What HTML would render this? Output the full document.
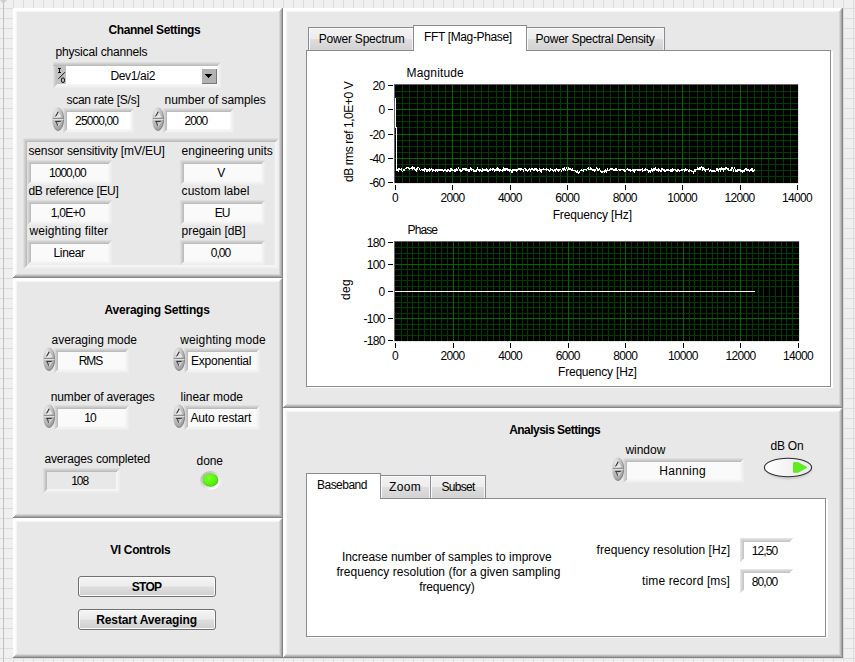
<!DOCTYPE html>
<html lang="en"><head><meta charset="utf-8"><title>FFT Analyzer Front Panel</title>
<style>
html,body{margin:0;padding:0}
body{width:855px;height:662px;overflow:hidden;position:relative;background-color:#f0f0f0;
 background-image:linear-gradient(to right,#dcdcdc 1px,transparent 1px),linear-gradient(to bottom,#dcdcdc 1px,transparent 1px);
 background-size:10px 10px;background-position:3px 8px;
 font:12px/14px "Liberation Sans",sans-serif;color:#000}
.abs,.t,.panel,.rec,.spin,.tab,.tabc,.btn{position:absolute;box-sizing:border-box}
.t{z-index:5;white-space:pre;font:12px/14px "Liberation Sans",sans-serif;color:#000}
.t.b{font-weight:bold}
.panel{background:#e8e8e8;box-shadow:inset -1px -1px 0 #858585,inset 1px 1px 0 #fff,inset -2px -2px 0 #a6a6a6,inset 2px 2px 0 #fff,inset -3px -3px 0 #bfbfbf,inset 3px 3px 0 #fcfcfc,inset -4px -4px 0 #d6d6d6,inset 4px 4px 0 #f5f5f5}
.rec{background:#fafafa;box-shadow:inset 1px 1px 0 #dedede,inset -1px -1px 0 #ececec,inset 2px 2px 0 #d2d2d2,inset -2px -2px 0 #f0f0f0,inset 3px 3px 0 #c7c7c7,inset -3px -3px 0 #f3f3f3,inset 4px 4px 0 #bcbcbc,inset -4px -4px 0 #f6f6f6}
.rec.w{background:#fff}
.rec.ow{background:#fff;box-shadow:inset 1px 1px 0 #e4e4e4,inset -1px -1px 0 #fff,inset 2px 2px 0 #d8d8d8,inset -2px -2px 0 #fff,inset 3px 3px 0 #cfcfcf,inset -3px -3px 0 #fff,inset 4px 4px 0 #c6c6c6,inset -4px -4px 0 #fff}
.rec.tr{background:#e8e8e8}
.rec.sub{background:#e8e8e8}
.tab{border:1px solid #898c95;border-bottom:none;box-shadow:inset 1px 1px 0 #fafafa,inset -1px 0 0 #f4f4f4;background:linear-gradient(to bottom,#f3f3f3 0,#ececec 48%,#dedede 52%,#d2d2d2 100%)}
.tab.act{background:#fff;z-index:2;box-shadow:none}
.tabc{background:#fff;border:1px solid #898c95;box-shadow:2px 1px 0 #fff}
.btn{border:1px solid #707070;border-radius:3px;background:linear-gradient(to bottom,#f4f4f4 0,#ececec 48%,#dedede 52%,#d0d0d0 100%);box-shadow:inset 0 0 0 1px #fbfbfb}
svg{position:absolute;overflow:visible}
.spin{z-index:3}
</style></head><body>

<div class="abs" style="left:3px;top:0;width:1px;height:662px;background:#c0c0c0"></div>
<svg style="left:0;top:0" width="8" height="4"><polygon points="0,0 7,0 3.5,4" fill="#d0d0d0"/></svg>
<div class="panel" style="left:13px;top:8px;width:270px;height:270px"></div>
<div class="panel" style="left:13px;top:278px;width:270px;height:240px"></div>
<div class="panel" style="left:13px;top:518px;width:270px;height:140px"></div>
<div class="panel" style="left:283px;top:8px;width:560px;height:400px"></div>
<div class="panel" style="left:283px;top:408px;width:560px;height:250px"></div>
<div class="rec w" style="left:53px;top:62px;width:168px;height:26px;background:#fff"></div>
<div class="abs" style="left:56px;top:66px;width:10px;height:18px;background:#c2c2c2"></div>
<div class="abs" style="left:53px;top:65px;width:13px;height:1px;background:#bcbcbc"></div>
<svg style="left:56px;top:66px" width="11" height="18" viewBox="0 0 11 18"><g stroke="#111" stroke-width="1" fill="none" shape-rendering="crispEdges"><path d="M2 2.5H5M3.5 2.5V7M2 6.5H5"/></g>
<path d="M2.4 12.8 L9 6.2" stroke="#111" stroke-width="1" fill="none"/><ellipse cx="7" cy="14.2" rx="1.6" ry="2.4" stroke="#111" stroke-width="1" fill="none"/></svg>
<div class="abs" style="left:200px;top:67px;width:17px;height:17px;background:#b2b2b2;box-shadow:inset 2px 2px 0 #fcfcfc,inset -1px -1px 0 #777"></div>
<svg style="left:205px;top:74px" width="7" height="4" shape-rendering="crispEdges"><path d="M0 0H7V1H6V2H5V3H4V4H3V3H2V2H1V1H0Z" fill="#000"/></svg>
<svg class="spin" style="left:52px;top:107px" width="12" height="24" viewBox="0 0 12 24">
<defs><radialGradient id="sg52_107" cx="32%" cy="22%" r="80%"><stop offset="0" stop-color="#ececec"/><stop offset="0.4" stop-color="#c8c8c8"/><stop offset="1" stop-color="#a0a0a0"/></radialGradient>
<linearGradient id="sr52_107" x1="0" y1="0" x2="1" y2="1"><stop offset="0.25" stop-color="#d8d8d8" stop-opacity="0.6"/><stop offset="0.6" stop-color="#8c8c8c"/><stop offset="1" stop-color="#6a6a6a"/></linearGradient></defs>
<ellipse cx="6" cy="12" rx="5.6" ry="11.5" fill="url(#sg52_107)" stroke="url(#sr52_107)" stroke-width="0.9"/>
<rect x="0.8" y="11" width="10.6" height="1" fill="#8e8e8e"/><rect x="0.8" y="12" width="10.6" height="1" fill="#e0e0e0"/>
<path d="M6 5 L8.6 9.6 L3.4 9.6 Z" fill="#dcdcdc"/><path d="M6.2 4.8 L3.6 9.4" stroke="#2e2e2e" stroke-width="1.1" fill="none"/><path d="M6.6 6.4 L8.8 9.6 L4 9.6" stroke="#f6f6f6" stroke-width="0.8" fill="none"/>
<path d="M3.4 14.4 L8.6 14.4 L6 19 Z" fill="#bcbcbc"/><path d="M3.2 14.4 L8.8 14.4" stroke="#333" stroke-width="1.1" fill="none"/><path d="M4 14.8 L6 19" stroke="#3c3c3c" stroke-width="1" fill="none"/><path d="M6.2 19 L8.6 14.9" stroke="#f0f0f0" stroke-width="0.8" fill="none"/>
</svg>
<div class="rec w" style="left:63px;top:108px;width:71px;height:25px"></div>
<svg class="spin" style="left:152px;top:107px" width="12" height="24" viewBox="0 0 12 24">
<defs><radialGradient id="sg152_107" cx="32%" cy="22%" r="80%"><stop offset="0" stop-color="#ececec"/><stop offset="0.4" stop-color="#c8c8c8"/><stop offset="1" stop-color="#a0a0a0"/></radialGradient>
<linearGradient id="sr152_107" x1="0" y1="0" x2="1" y2="1"><stop offset="0.25" stop-color="#d8d8d8" stop-opacity="0.6"/><stop offset="0.6" stop-color="#8c8c8c"/><stop offset="1" stop-color="#6a6a6a"/></linearGradient></defs>
<ellipse cx="6" cy="12" rx="5.6" ry="11.5" fill="url(#sg152_107)" stroke="url(#sr152_107)" stroke-width="0.9"/>
<rect x="0.8" y="11" width="10.6" height="1" fill="#8e8e8e"/><rect x="0.8" y="12" width="10.6" height="1" fill="#e0e0e0"/>
<path d="M6 5 L8.6 9.6 L3.4 9.6 Z" fill="#dcdcdc"/><path d="M6.2 4.8 L3.6 9.4" stroke="#2e2e2e" stroke-width="1.1" fill="none"/><path d="M6.6 6.4 L8.8 9.6 L4 9.6" stroke="#f6f6f6" stroke-width="0.8" fill="none"/>
<path d="M3.4 14.4 L8.6 14.4 L6 19 Z" fill="#bcbcbc"/><path d="M3.2 14.4 L8.8 14.4" stroke="#333" stroke-width="1.1" fill="none"/><path d="M4 14.8 L6 19" stroke="#3c3c3c" stroke-width="1" fill="none"/><path d="M6.2 19 L8.6 14.9" stroke="#f0f0f0" stroke-width="0.8" fill="none"/>
</svg>
<div class="rec w" style="left:163px;top:108px;width:71px;height:25px"></div>
<div class="rec sub" style="left:23px;top:138px;width:256px;height:131px"></div>
<div class="rec " style="left:27px;top:160px;width:85px;height:25px"></div>
<div class="rec " style="left:180px;top:160px;width:85px;height:25px"></div>
<div class="rec " style="left:27px;top:200px;width:85px;height:25px"></div>
<div class="rec " style="left:180px;top:200px;width:85px;height:25px"></div>
<div class="rec " style="left:27px;top:240px;width:85px;height:25px"></div>
<div class="rec " style="left:180px;top:240px;width:85px;height:25px"></div>
<svg class="spin" style="left:43px;top:347px" width="12" height="24" viewBox="0 0 12 24">
<defs><radialGradient id="sg43_347" cx="32%" cy="22%" r="80%"><stop offset="0" stop-color="#ececec"/><stop offset="0.4" stop-color="#c8c8c8"/><stop offset="1" stop-color="#a0a0a0"/></radialGradient>
<linearGradient id="sr43_347" x1="0" y1="0" x2="1" y2="1"><stop offset="0.25" stop-color="#d8d8d8" stop-opacity="0.6"/><stop offset="0.6" stop-color="#8c8c8c"/><stop offset="1" stop-color="#6a6a6a"/></linearGradient></defs>
<ellipse cx="6" cy="12" rx="5.6" ry="11.5" fill="url(#sg43_347)" stroke="url(#sr43_347)" stroke-width="0.9"/>
<rect x="0.8" y="11" width="10.6" height="1" fill="#8e8e8e"/><rect x="0.8" y="12" width="10.6" height="1" fill="#e0e0e0"/>
<path d="M6 5 L8.6 9.6 L3.4 9.6 Z" fill="#dcdcdc"/><path d="M6.2 4.8 L3.6 9.4" stroke="#2e2e2e" stroke-width="1.1" fill="none"/><path d="M6.6 6.4 L8.8 9.6 L4 9.6" stroke="#f6f6f6" stroke-width="0.8" fill="none"/>
<path d="M3.4 14.4 L8.6 14.4 L6 19 Z" fill="#bcbcbc"/><path d="M3.2 14.4 L8.8 14.4" stroke="#333" stroke-width="1.1" fill="none"/><path d="M4 14.8 L6 19" stroke="#3c3c3c" stroke-width="1" fill="none"/><path d="M6.2 19 L8.6 14.9" stroke="#f0f0f0" stroke-width="0.8" fill="none"/>
</svg>
<div class="rec " style="left:54px;top:348px;width:75px;height:25px"></div>
<svg class="spin" style="left:173px;top:347px" width="12" height="24" viewBox="0 0 12 24">
<defs><radialGradient id="sg173_347" cx="32%" cy="22%" r="80%"><stop offset="0" stop-color="#ececec"/><stop offset="0.4" stop-color="#c8c8c8"/><stop offset="1" stop-color="#a0a0a0"/></radialGradient>
<linearGradient id="sr173_347" x1="0" y1="0" x2="1" y2="1"><stop offset="0.25" stop-color="#d8d8d8" stop-opacity="0.6"/><stop offset="0.6" stop-color="#8c8c8c"/><stop offset="1" stop-color="#6a6a6a"/></linearGradient></defs>
<ellipse cx="6" cy="12" rx="5.6" ry="11.5" fill="url(#sg173_347)" stroke="url(#sr173_347)" stroke-width="0.9"/>
<rect x="0.8" y="11" width="10.6" height="1" fill="#8e8e8e"/><rect x="0.8" y="12" width="10.6" height="1" fill="#e0e0e0"/>
<path d="M6 5 L8.6 9.6 L3.4 9.6 Z" fill="#dcdcdc"/><path d="M6.2 4.8 L3.6 9.4" stroke="#2e2e2e" stroke-width="1.1" fill="none"/><path d="M6.6 6.4 L8.8 9.6 L4 9.6" stroke="#f6f6f6" stroke-width="0.8" fill="none"/>
<path d="M3.4 14.4 L8.6 14.4 L6 19 Z" fill="#bcbcbc"/><path d="M3.2 14.4 L8.8 14.4" stroke="#333" stroke-width="1.1" fill="none"/><path d="M4 14.8 L6 19" stroke="#3c3c3c" stroke-width="1" fill="none"/><path d="M6.2 19 L8.6 14.9" stroke="#f0f0f0" stroke-width="0.8" fill="none"/>
</svg>
<div class="rec " style="left:184px;top:348px;width:76px;height:25px"></div>
<svg class="spin" style="left:43px;top:404px" width="12" height="24" viewBox="0 0 12 24">
<defs><radialGradient id="sg43_404" cx="32%" cy="22%" r="80%"><stop offset="0" stop-color="#ececec"/><stop offset="0.4" stop-color="#c8c8c8"/><stop offset="1" stop-color="#a0a0a0"/></radialGradient>
<linearGradient id="sr43_404" x1="0" y1="0" x2="1" y2="1"><stop offset="0.25" stop-color="#d8d8d8" stop-opacity="0.6"/><stop offset="0.6" stop-color="#8c8c8c"/><stop offset="1" stop-color="#6a6a6a"/></linearGradient></defs>
<ellipse cx="6" cy="12" rx="5.6" ry="11.5" fill="url(#sg43_404)" stroke="url(#sr43_404)" stroke-width="0.9"/>
<rect x="0.8" y="11" width="10.6" height="1" fill="#8e8e8e"/><rect x="0.8" y="12" width="10.6" height="1" fill="#e0e0e0"/>
<path d="M6 5 L8.6 9.6 L3.4 9.6 Z" fill="#dcdcdc"/><path d="M6.2 4.8 L3.6 9.4" stroke="#2e2e2e" stroke-width="1.1" fill="none"/><path d="M6.6 6.4 L8.8 9.6 L4 9.6" stroke="#f6f6f6" stroke-width="0.8" fill="none"/>
<path d="M3.4 14.4 L8.6 14.4 L6 19 Z" fill="#bcbcbc"/><path d="M3.2 14.4 L8.8 14.4" stroke="#333" stroke-width="1.1" fill="none"/><path d="M4 14.8 L6 19" stroke="#3c3c3c" stroke-width="1" fill="none"/><path d="M6.2 19 L8.6 14.9" stroke="#f0f0f0" stroke-width="0.8" fill="none"/>
</svg>
<div class="rec " style="left:54px;top:405px;width:75px;height:25px"></div>
<svg class="spin" style="left:173px;top:404px" width="12" height="24" viewBox="0 0 12 24">
<defs><radialGradient id="sg173_404" cx="32%" cy="22%" r="80%"><stop offset="0" stop-color="#ececec"/><stop offset="0.4" stop-color="#c8c8c8"/><stop offset="1" stop-color="#a0a0a0"/></radialGradient>
<linearGradient id="sr173_404" x1="0" y1="0" x2="1" y2="1"><stop offset="0.25" stop-color="#d8d8d8" stop-opacity="0.6"/><stop offset="0.6" stop-color="#8c8c8c"/><stop offset="1" stop-color="#6a6a6a"/></linearGradient></defs>
<ellipse cx="6" cy="12" rx="5.6" ry="11.5" fill="url(#sg173_404)" stroke="url(#sr173_404)" stroke-width="0.9"/>
<rect x="0.8" y="11" width="10.6" height="1" fill="#8e8e8e"/><rect x="0.8" y="12" width="10.6" height="1" fill="#e0e0e0"/>
<path d="M6 5 L8.6 9.6 L3.4 9.6 Z" fill="#dcdcdc"/><path d="M6.2 4.8 L3.6 9.4" stroke="#2e2e2e" stroke-width="1.1" fill="none"/><path d="M6.6 6.4 L8.8 9.6 L4 9.6" stroke="#f6f6f6" stroke-width="0.8" fill="none"/>
<path d="M3.4 14.4 L8.6 14.4 L6 19 Z" fill="#bcbcbc"/><path d="M3.2 14.4 L8.8 14.4" stroke="#333" stroke-width="1.1" fill="none"/><path d="M4 14.8 L6 19" stroke="#3c3c3c" stroke-width="1" fill="none"/><path d="M6.2 19 L8.6 14.9" stroke="#f0f0f0" stroke-width="0.8" fill="none"/>
</svg>
<div class="rec " style="left:184px;top:405px;width:76px;height:25px"></div>
<div class="rec tr" style="left:43px;top:468px;width:77px;height:25px"></div>
<svg style="left:199px;top:470px" width="23" height="21" viewBox="0 0 23 21">
<defs><linearGradient id="lr" x1="0" y1="0" x2="1" y2="1"><stop offset="0.1" stop-color="#b4b4b4"/><stop offset="0.5" stop-color="#dcdcdc"/><stop offset="0.8" stop-color="#ffffff"/></linearGradient>
<radialGradient id="lg" cx="40%" cy="35%" r="70%"><stop offset="0" stop-color="#7dff2e"/><stop offset="0.6" stop-color="#5cf612"/><stop offset="1" stop-color="#4fdc10"/></radialGradient></defs>
<ellipse cx="11.5" cy="10.5" rx="10.2" ry="9.4" fill="url(#lr)"/><ellipse cx="11.5" cy="10.1" rx="7.8" ry="6.7" fill="#46c40c"/><ellipse cx="11.2" cy="9.8" rx="7.4" ry="6.3" fill="url(#lg)"/></svg>
<div class="btn" style="left:78px;top:576px;width:138px;height:21px"></div>
<div class="btn" style="left:78px;top:609px;width:138px;height:21px"></div>
<div class="tabc" style="left:306px;top:50px;width:525px;height:337px"></div>
<div class="tab" style="left:308px;top:27px;width:106px;height:23px"></div>
<div class="tab" style="left:526px;top:27px;width:139px;height:23px"></div>
<div class="tab act" style="left:413px;top:25px;width:114px;height:26px"></div>
<div class="tabc" style="left:306px;top:498px;width:520px;height:139px"></div>
<div class="tab" style="left:380px;top:475px;width:51px;height:23px"></div>
<div class="tab" style="left:430px;top:475px;width:56px;height:23px"></div>
<div class="tab act" style="left:306px;top:473px;width:75px;height:26px"></div>
<svg class="spin" style="left:612px;top:457px" width="12" height="24" viewBox="0 0 12 24">
<defs><radialGradient id="sg612_457" cx="32%" cy="22%" r="80%"><stop offset="0" stop-color="#ececec"/><stop offset="0.4" stop-color="#c8c8c8"/><stop offset="1" stop-color="#a0a0a0"/></radialGradient>
<linearGradient id="sr612_457" x1="0" y1="0" x2="1" y2="1"><stop offset="0.25" stop-color="#d8d8d8" stop-opacity="0.6"/><stop offset="0.6" stop-color="#8c8c8c"/><stop offset="1" stop-color="#6a6a6a"/></linearGradient></defs>
<ellipse cx="6" cy="12" rx="5.6" ry="11.5" fill="url(#sg612_457)" stroke="url(#sr612_457)" stroke-width="0.9"/>
<rect x="0.8" y="11" width="10.6" height="1" fill="#8e8e8e"/><rect x="0.8" y="12" width="10.6" height="1" fill="#e0e0e0"/>
<path d="M6 5 L8.6 9.6 L3.4 9.6 Z" fill="#dcdcdc"/><path d="M6.2 4.8 L3.6 9.4" stroke="#2e2e2e" stroke-width="1.1" fill="none"/><path d="M6.6 6.4 L8.8 9.6 L4 9.6" stroke="#f6f6f6" stroke-width="0.8" fill="none"/>
<path d="M3.4 14.4 L8.6 14.4 L6 19 Z" fill="#bcbcbc"/><path d="M3.2 14.4 L8.8 14.4" stroke="#333" stroke-width="1.1" fill="none"/><path d="M4 14.8 L6 19" stroke="#3c3c3c" stroke-width="1" fill="none"/><path d="M6.2 19 L8.6 14.9" stroke="#f0f0f0" stroke-width="0.8" fill="none"/>
</svg>
<div class="rec " style="left:623px;top:458px;width:121px;height:25px"></div>
<svg style="left:760px;top:454px" width="56" height="28" viewBox="0 0 56 28">
<defs><linearGradient id="sw" x1="0" y1="0" x2="1" y2="0"><stop offset="0" stop-color="#ffffff"/><stop offset="0.55" stop-color="#f2f2f2"/><stop offset="1" stop-color="#e9e9e9"/></linearGradient>
<radialGradient id="sh" cx="50%" cy="50%" r="50%"><stop offset="0.8" stop-color="#cfcfcf"/><stop offset="1" stop-color="#e8e8e8" stop-opacity="0"/></radialGradient></defs>
<ellipse cx="28.5" cy="14.6" rx="27" ry="12.6" fill="url(#sh)"/>
<ellipse cx="28" cy="13.5" rx="23.6" ry="9.2" fill="url(#sw)" stroke="#2e2e2e" stroke-width="1.1"/>
<path d="M33.5 8.6 H38 L47 13.4 L38 18.3 H33.5 Z" fill="#63ea22" stroke="#63ea22" stroke-width="1" stroke-linejoin="round"/></svg>
<div class="rec ow" style="left:740px;top:538px;width:53px;height:24px"></div>
<div class="rec ow" style="left:740px;top:569px;width:53px;height:24px"></div>
<svg style="left:0;top:0" width="855" height="662" viewBox="0 0 855 662">
<rect x="394" y="84" width="405" height="100" fill="#e4e4e4"/>
<rect x="394" y="84" width="404" height="99" fill="#666"/>
<rect x="395" y="85" width="403" height="98" fill="#000"/>
<g shape-rendering="crispEdges">
<path d="M402.5 85V183M409.5 85V183M417.5 85V183M424.5 85V183M431.5 85V183M438.5 85V183M445.5 85V183M460.5 85V183M467.5 85V183M474.5 85V183M481.5 85V183M488.5 85V183M496.5 85V183M503.5 85V183M517.5 85V183M524.5 85V183M531.5 85V183M539.5 85V183M546.5 85V183M553.5 85V183M560.5 85V183M574.5 85V183M582.5 85V183M589.5 85V183M596.5 85V183M603.5 85V183M610.5 85V183M618.5 85V183M632.5 85V183M639.5 85V183M646.5 85V183M653.5 85V183M661.5 85V183M668.5 85V183M675.5 85V183M689.5 85V183M697.5 85V183M704.5 85V183M711.5 85V183M718.5 85V183M725.5 85V183M732.5 85V183M747.5 85V183M754.5 85V183M761.5 85V183M768.5 85V183M775.5 85V183M783.5 85V183M790.5 85V183M395 91.5H798M395 97.5H798M395 103.5H798M395 115.5H798M395 121.5H798M395 127.5H798M395 140.5H798M395 146.5H798M395 152.5H798M395 164.5H798M395 170.5H798M395 176.5H798" stroke="#003c00" stroke-width="1" fill="none"/>
<path d="M452.5 85V183M510.5 85V183M567.5 85V183M625.5 85V183M682.5 85V183M740.5 85V183M395 109.5H798M395 134.5H798M395 158.5H798" stroke="#006600" stroke-width="1" fill="none"/>
<path d="M388 85.5H393M388 109.5H393M388 134.5H393M388 158.5H393M388 182.5H393M395.5 185V190M452.5 185V190M510.5 185V190M567.5 185V190M625.5 185V190M682.5 185V190M740.5 185V190M797.5 185V190" stroke="#000" stroke-width="1" fill="none"/>
</g>
<path d="M396.5 170V171M397.5 169V171M398.5 168V172M399.5 168V170M400.5 169V170M401.5 168V171M402.5 171V172M403.5 169V171M404.5 169V171M405.5 168V169M406.5 167V169M407.5 167V168M408.5 167V169M409.5 168V170M410.5 168V169M411.5 167V169M412.5 166V170M413.5 167V169M414.5 167V170M415.5 169V171M416.5 168V172M417.5 167V170M418.5 167V168M419.5 168V170M420.5 170V171M421.5 169V170M422.5 169V171M423.5 169V171M424.5 168V172M425.5 168V170M426.5 169V172M427.5 169V172M428.5 169V171M429.5 168V172M430.5 169V171M431.5 168V170M432.5 169V172M433.5 169V171M434.5 170V171M435.5 169V172M436.5 169V171M437.5 169V172M438.5 169V171M439.5 169V171M440.5 169V171M441.5 169V171M442.5 169V171M443.5 170V172M444.5 169V171M445.5 169V171M446.5 170V172M447.5 169V172M448.5 169V171M449.5 170V172M450.5 168V172M451.5 168V171M452.5 169V171M453.5 170V171M454.5 169V172M455.5 169V172M456.5 168V171M457.5 169V171M458.5 167V169M459.5 169V171M460.5 169V172M461.5 170V172M462.5 168V171M463.5 168V170M464.5 168V170M465.5 168V171M466.5 168V171M467.5 169V171M468.5 169V172M469.5 169V172M470.5 167V170M471.5 168V171M472.5 169V170M473.5 169V172M474.5 170V172M475.5 170V172M476.5 169V172M477.5 167V170M478.5 169V171M479.5 169V172M480.5 169V171M481.5 170V172M482.5 168V172M483.5 169V171M484.5 169V171M485.5 169V171M486.5 168V171M487.5 169V172M488.5 170V172M489.5 169V171M490.5 168V171M491.5 169V170M492.5 168V171M493.5 168V170M494.5 169V172M495.5 169V171M496.5 168V171M497.5 167V171M498.5 168V171M499.5 169V172M500.5 169V171M501.5 170V171M502.5 169V172M503.5 167V171M504.5 168V171M505.5 168V171M506.5 168V170M507.5 168V171M508.5 169V171M509.5 169V172M510.5 169V171M511.5 170V173M512.5 169V173M513.5 169V171M514.5 169V171M515.5 169V171M516.5 169V172M517.5 169V171M518.5 168V170M519.5 168V170M520.5 168V171M521.5 168V170M522.5 169V170M523.5 169V172M524.5 168V169M525.5 168V171M526.5 169V171M527.5 170V172M528.5 169V171M529.5 168V170M530.5 169V172M531.5 168V170M532.5 168V170M533.5 169V171M534.5 168V171M535.5 168V170M536.5 168V171M537.5 169V172M538.5 170V171M539.5 168V171M540.5 169V172M541.5 169V173M542.5 169V170M543.5 168V170M544.5 169V170M545.5 169V170M546.5 168V171M547.5 169V170M548.5 169V171M549.5 170V172M550.5 168V171M551.5 169V170M552.5 169V171M553.5 170V172M554.5 169V171M555.5 169V172M556.5 168V170M557.5 169V171M558.5 169V172M559.5 169V171M560.5 169V170M561.5 170V172M562.5 168V170M563.5 168V171M564.5 167V170M565.5 169V171M566.5 167V169M567.5 169V171M568.5 167V170M569.5 168V170M570.5 168V170M571.5 169V171M572.5 168V171M573.5 170V171M574.5 170V171M575.5 170V172M576.5 171V173M577.5 170V173M578.5 172V174M579.5 171V173M580.5 170V171M581.5 169V171M582.5 170V171M583.5 169V172M584.5 169V170M585.5 169V170M586.5 169V171M587.5 168V169M588.5 167V170M589.5 169V170M590.5 167V170M591.5 168V170M592.5 169V171M593.5 169V171M594.5 169V172M595.5 169V171M596.5 167V169M597.5 168V171M598.5 169V171M599.5 168V170M600.5 170V172M601.5 171V173M602.5 171V173M603.5 171V172M604.5 170V173M605.5 169V172M606.5 170V173M607.5 168V171M608.5 170V171M609.5 169V171M610.5 168V170M611.5 168V170M612.5 168V170M613.5 169V171M614.5 169V171M615.5 168V171M616.5 168V171M617.5 170V171M618.5 169V170M619.5 169V171M620.5 169V171M621.5 169V170M622.5 169V170M623.5 169V171M624.5 169V172M625.5 170V172M626.5 169V170M627.5 168V170M628.5 169V171M629.5 169V171M630.5 169V172M631.5 170V171M632.5 169V171M633.5 169V172M634.5 169V173M635.5 169V171M636.5 169V170M637.5 169V171M638.5 169V171M639.5 169V171M640.5 169V171M641.5 169V170M642.5 168V172M643.5 170V171M644.5 169V171M645.5 168V171M646.5 169V170M647.5 169V171M648.5 170V173M649.5 170V172M650.5 170V173M651.5 168V171M652.5 169V172M653.5 168V171M654.5 168V171M655.5 167V170M656.5 169V171M657.5 169V171M658.5 168V172M659.5 169V171M660.5 170V172M661.5 168V172M662.5 168V170M663.5 169V171M664.5 169V172M665.5 170V172M666.5 169V171M667.5 169V171M668.5 169V171M669.5 170V171M670.5 169V172M671.5 169V172M672.5 168V172M673.5 169V171M674.5 169V170M675.5 169V171M676.5 170V172M677.5 169V172M678.5 169V171M679.5 170V172M680.5 170V171M681.5 169V171M682.5 169V171M683.5 169V170M684.5 169V172M685.5 168V171M686.5 169V171M687.5 169V170M688.5 170V172M689.5 169V172M690.5 170V171M691.5 170V172M692.5 171V172M693.5 171V174M694.5 169V172M695.5 169V172M696.5 169V170M697.5 167V170M698.5 168V170M699.5 167V170M700.5 167V170M701.5 166V168M702.5 167V171M703.5 167V170M704.5 168V171M705.5 169V172M706.5 169V170M707.5 169V170M708.5 168V170M709.5 170V172M710.5 169V171M711.5 170V172M712.5 170V172M713.5 170V172M714.5 170V172M715.5 171V172M716.5 168V171M717.5 168V171M718.5 169V172M719.5 168V170M720.5 168V172M721.5 167V170M722.5 168V170M723.5 168V172M724.5 168V170M725.5 167V170M726.5 167V169M727.5 168V170M728.5 168V171M729.5 170V171M730.5 169V171M731.5 167V171M732.5 167V169M733.5 169V172M734.5 167V169M735.5 169V172M736.5 170V172M737.5 169V172M738.5 169V171M739.5 169V171M740.5 169V172M741.5 170V172M742.5 170V173M743.5 170V172M744.5 169V172M745.5 168V170M746.5 168V171M747.5 169V171M748.5 169V171M749.5 170V172M750.5 169V171M751.5 168V171M752.5 168V172M753.5 170V172M754.5 169V171" stroke="#fff" stroke-width="1" fill="none" shape-rendering="crispEdges"/><path d="M395.5 98V128M396.5 127V170" stroke="#fff" stroke-width="1" fill="none" shape-rendering="crispEdges"/>
</svg>
<svg style="left:0;top:0" width="855" height="662" viewBox="0 0 855 662">
<rect x="394" y="241" width="406" height="101" fill="#e4e4e4"/>
<rect x="394" y="241" width="405" height="100" fill="#666"/>
<rect x="395" y="242" width="404" height="99" fill="#000"/>
<g shape-rendering="crispEdges">
<path d="M401.5 242V341M407.5 242V341M412.5 242V341M418.5 242V341M424.5 242V341M430.5 242V341M435.5 242V341M441.5 242V341M447.5 242V341M458.5 242V341M464.5 242V341M470.5 242V341M476.5 242V341M481.5 242V341M487.5 242V341M493.5 242V341M499.5 242V341M504.5 242V341M516.5 242V341M522.5 242V341M527.5 242V341M533.5 242V341M539.5 242V341M545.5 242V341M550.5 242V341M556.5 242V341M562.5 242V341M573.5 242V341M579.5 242V341M585.5 242V341M591.5 242V341M597.5 242V341M602.5 242V341M608.5 242V341M614.5 242V341M620.5 242V341M631.5 242V341M637.5 242V341M643.5 242V341M648.5 242V341M654.5 242V341M660.5 242V341M666.5 242V341M671.5 242V341M677.5 242V341M689.5 242V341M694.5 242V341M700.5 242V341M706.5 242V341M712.5 242V341M717.5 242V341M723.5 242V341M729.5 242V341M735.5 242V341M746.5 242V341M752.5 242V341M758.5 242V341M763.5 242V341M769.5 242V341M775.5 242V341M781.5 242V341M786.5 242V341M792.5 242V341M395 247.5H799M395 253.5H799M395 258.5H799M395 269.5H799M395 275.5H799M395 280.5H799M395 286.5H799M395 296.5H799M395 302.5H799M395 307.5H799M395 313.5H799M395 324.5H799M395 329.5H799M395 335.5H799" stroke="#003c00" stroke-width="1" fill="none"/>
<path d="M453.5 242V341M510.5 242V341M568.5 242V341M625.5 242V341M683.5 242V341M740.5 242V341M395 264.5H799M395 318.5H799" stroke="#006600" stroke-width="1" fill="none"/>
<path d="M388 242.5H393M388 264.5H393M388 291.5H393M388 318.5H393M388 340.5H393M395.5 343V348M453.5 343V348M510.5 343V348M568.5 343V348M625.5 343V348M683.5 343V348M740.5 343V348M798.5 343V348" stroke="#000" stroke-width="1" fill="none"/>
</g>
<path d="M395 291.5H755" stroke="#fff" stroke-width="1" fill="none" shape-rendering="crispEdges"/>
</svg>
<span class="t b" style="left:108.4px;top:23px;letter-spacing:-0.38px;">Channel Settings</span>
<span class="t" style="left:55.4px;top:45px;letter-spacing:-0.16px;">physical channels</span>
<span class="t" style="left:110.4px;top:69px;letter-spacing:-0.33px;">Dev1/ai2</span>
<span class="t" style="left:66.4px;top:93px;letter-spacing:-0.24px;">scan rate [S/s]</span>
<span class="t" style="left:164.6px;top:93px;letter-spacing:-0.05px;">number of samples</span>
<span class="t" style="left:75.1px;top:114px;letter-spacing:-0.88px;">25000,00</span>
<span class="t" style="left:184.5px;top:114px;letter-spacing:-1.00px;">2000</span>
<span class="t" style="left:28.4px;top:144px;letter-spacing:-0.12px;">sensor sensitivity [mV/EU]</span>
<span class="t" style="left:181.6px;top:144px;letter-spacing:-0.01px;">engineering units</span>
<span class="t" style="left:48.9px;top:166px;letter-spacing:-0.93px;">1000,00</span>
<span class="t" style="left:217.2px;top:166px;">V</span>
<span class="t" style="left:28.4px;top:184px;letter-spacing:-0.31px;">dB reference [EU]</span>
<span class="t" style="left:181.6px;top:184px;letter-spacing:0.04px;">custom label</span>
<span class="t" style="left:50.7px;top:206px;letter-spacing:-0.74px;">1,0E+0</span>
<span class="t" style="left:214.7px;top:206px;letter-spacing:-1.00px;">EU</span>
<span class="t" style="left:29.4px;top:224px;letter-spacing:0.13px;">weighting filter</span>
<span class="t" style="left:181.6px;top:224px;letter-spacing:-0.06px;">pregain [dB]</span>
<span class="t" style="left:53.5px;top:246px;letter-spacing:-0.35px;">Linear</span>
<span class="t" style="left:210.8px;top:246px;letter-spacing:-1.00px;">0,00</span>
<span class="t b" style="left:104.5px;top:303px;letter-spacing:-0.21px;">Averaging Settings</span>
<span class="t" style="left:51.6px;top:333px;letter-spacing:-0.05px;">averaging mode</span>
<span class="t" style="left:180.3px;top:333px;letter-spacing:0.10px;">weighting mode</span>
<span class="t" style="left:78.7px;top:354px;letter-spacing:-1.00px;">RMS</span>
<span class="t" style="left:190.9px;top:354px;letter-spacing:-0.21px;">Exponential</span>
<span class="t" style="left:50.8px;top:390px;letter-spacing:-0.16px;">number of averages</span>
<span class="t" style="left:180.5px;top:390px;letter-spacing:-0.02px;">linear mode</span>
<span class="t" style="left:84.3px;top:411px;letter-spacing:-1.00px;">10</span>
<span class="t" style="left:190.4px;top:411px;letter-spacing:-0.10px;">Auto restart</span>
<span class="t" style="left:44.4px;top:452px;letter-spacing:-0.13px;">averages completed</span>
<span class="t" style="left:71.2px;top:474px;letter-spacing:-1.00px;">108</span>
<span class="t" style="left:196.6px;top:454px;letter-spacing:-0.14px;">done</span>
<span class="t b" style="left:110.2px;top:543px;letter-spacing:-0.35px;">VI Controls</span>
<span class="t b" style="left:131.8px;top:580px;letter-spacing:-0.75px;">STOP</span>
<span class="t b" style="left:96.2px;top:613px;letter-spacing:-0.10px;">Restart Averaging</span>
<span class="t" style="left:318.7px;top:32px;letter-spacing:-0.20px;">Power Spectrum</span>
<span class="t" style="left:424.0px;top:30px;letter-spacing:-0.36px;">FFT [Mag-Phase]</span>
<span class="t" style="left:535.6px;top:32px;letter-spacing:-0.26px;">Power Spectral Density</span>
<span class="t" style="left:406.6px;top:66px;letter-spacing:0.13px;">Magnitude</span>
<span class="t" style="left:407.6px;top:223px;letter-spacing:-0.94px;">Phase</span>
<span class="t" style="left:552.7px;top:208px;letter-spacing:-0.16px;">Frequency [Hz]</span>
<span class="t" style="left:558.0px;top:365px;letter-spacing:-0.20px;">Frequency [Hz]</span>
<span class="t b" style="left:509.2px;top:423px;letter-spacing:-0.53px;">Analysis Settings</span>
<span class="t" style="left:625.4px;top:443px;letter-spacing:-0.01px;">window</span>
<span class="t" style="left:659.3px;top:464px;letter-spacing:0.28px;">Hanning</span>
<span class="t" style="left:770.6px;top:439px;letter-spacing:-0.26px;">dB On</span>
<span class="t" style="left:317.0px;top:478px;letter-spacing:-0.52px;">Baseband</span>
<span class="t" style="left:389.1px;top:480px;letter-spacing:0.34px;">Zoom</span>
<span class="t" style="left:441.6px;top:480px;letter-spacing:-0.73px;">Subset</span>
<span class="t" style="left:341.9px;top:550px;letter-spacing:-0.03px;">Increase number of samples to improve</span>
<span class="t" style="left:336.4px;top:565px;letter-spacing:0.03px;">frequency resolution (for a given sampling</span>
<span class="t" style="left:419.2px;top:580px;letter-spacing:-0.14px;">frequency)</span>
<span class="t" style="left:596.6px;top:543px;letter-spacing:0.03px;">frequency resolution [Hz]</span>
<span class="t" style="left:642.1px;top:574px;letter-spacing:0.12px;">time record [ms]</span>
<span class="t" style="left:751.7px;top:544px;letter-spacing:-0.86px;">12,50</span>
<span class="t" style="left:751.7px;top:575px;letter-spacing:-0.86px;">80,00</span>
<span class="t" style="left:372.6px;top:79px;letter-spacing:-0.7px">20</span>
<span class="t" style="left:378.6px;top:103px;letter-spacing:-0.7px">0</span>
<span class="t" style="left:369.3px;top:128px;letter-spacing:-0.7px">-20</span>
<span class="t" style="left:369.3px;top:152px;letter-spacing:-0.7px">-40</span>
<span class="t" style="left:369.3px;top:176px;letter-spacing:-0.7px">-60</span>
<span class="t" style="left:366.7px;top:236px;letter-spacing:-0.7px">180</span>
<span class="t" style="left:366.7px;top:258px;letter-spacing:-0.7px">100</span>
<span class="t" style="left:378.6px;top:285px;letter-spacing:-0.7px">0</span>
<span class="t" style="left:363.4px;top:312px;letter-spacing:-0.7px">-100</span>
<span class="t" style="left:363.4px;top:334px;letter-spacing:-0.7px">-180</span>
<span class="t" style="left:392.0px;top:191px;letter-spacing:-0.7px">0</span>
<span class="t" style="left:392.0px;top:349px;letter-spacing:-0.7px">0</span>
<span class="t" style="left:440.5px;top:191px;letter-spacing:-0.7px">2000</span>
<span class="t" style="left:440.6px;top:349px;letter-spacing:-0.7px">2000</span>
<span class="t" style="left:497.9px;top:191px;letter-spacing:-0.7px">4000</span>
<span class="t" style="left:498.2px;top:349px;letter-spacing:-0.7px">4000</span>
<span class="t" style="left:555.3px;top:191px;letter-spacing:-0.7px">6000</span>
<span class="t" style="left:555.8px;top:349px;letter-spacing:-0.7px">6000</span>
<span class="t" style="left:612.8px;top:191px;letter-spacing:-0.7px">8000</span>
<span class="t" style="left:613.3px;top:349px;letter-spacing:-0.7px">8000</span>
<span class="t" style="left:667.2px;top:191px;letter-spacing:-0.7px">10000</span>
<span class="t" style="left:667.9px;top:349px;letter-spacing:-0.7px">10000</span>
<span class="t" style="left:724.6px;top:191px;letter-spacing:-0.7px">12000</span>
<span class="t" style="left:725.5px;top:349px;letter-spacing:-0.7px">12000</span>
<span class="t" style="left:782.1px;top:191px;letter-spacing:-0.7px">14000</span>
<span class="t" style="left:783.1px;top:349px;letter-spacing:-0.7px">14000</span>
<span class="t" style="left:342.0px;top:182.3px;transform-origin:0 0;transform:rotate(-90deg);letter-spacing:-0.43px">dB rms ref 1,0E+0 V</span>
<span class="t" style="left:339.0px;top:300.0px;transform-origin:0 0;transform:rotate(-90deg);letter-spacing:0.33px">deg</span>
</body></html>
